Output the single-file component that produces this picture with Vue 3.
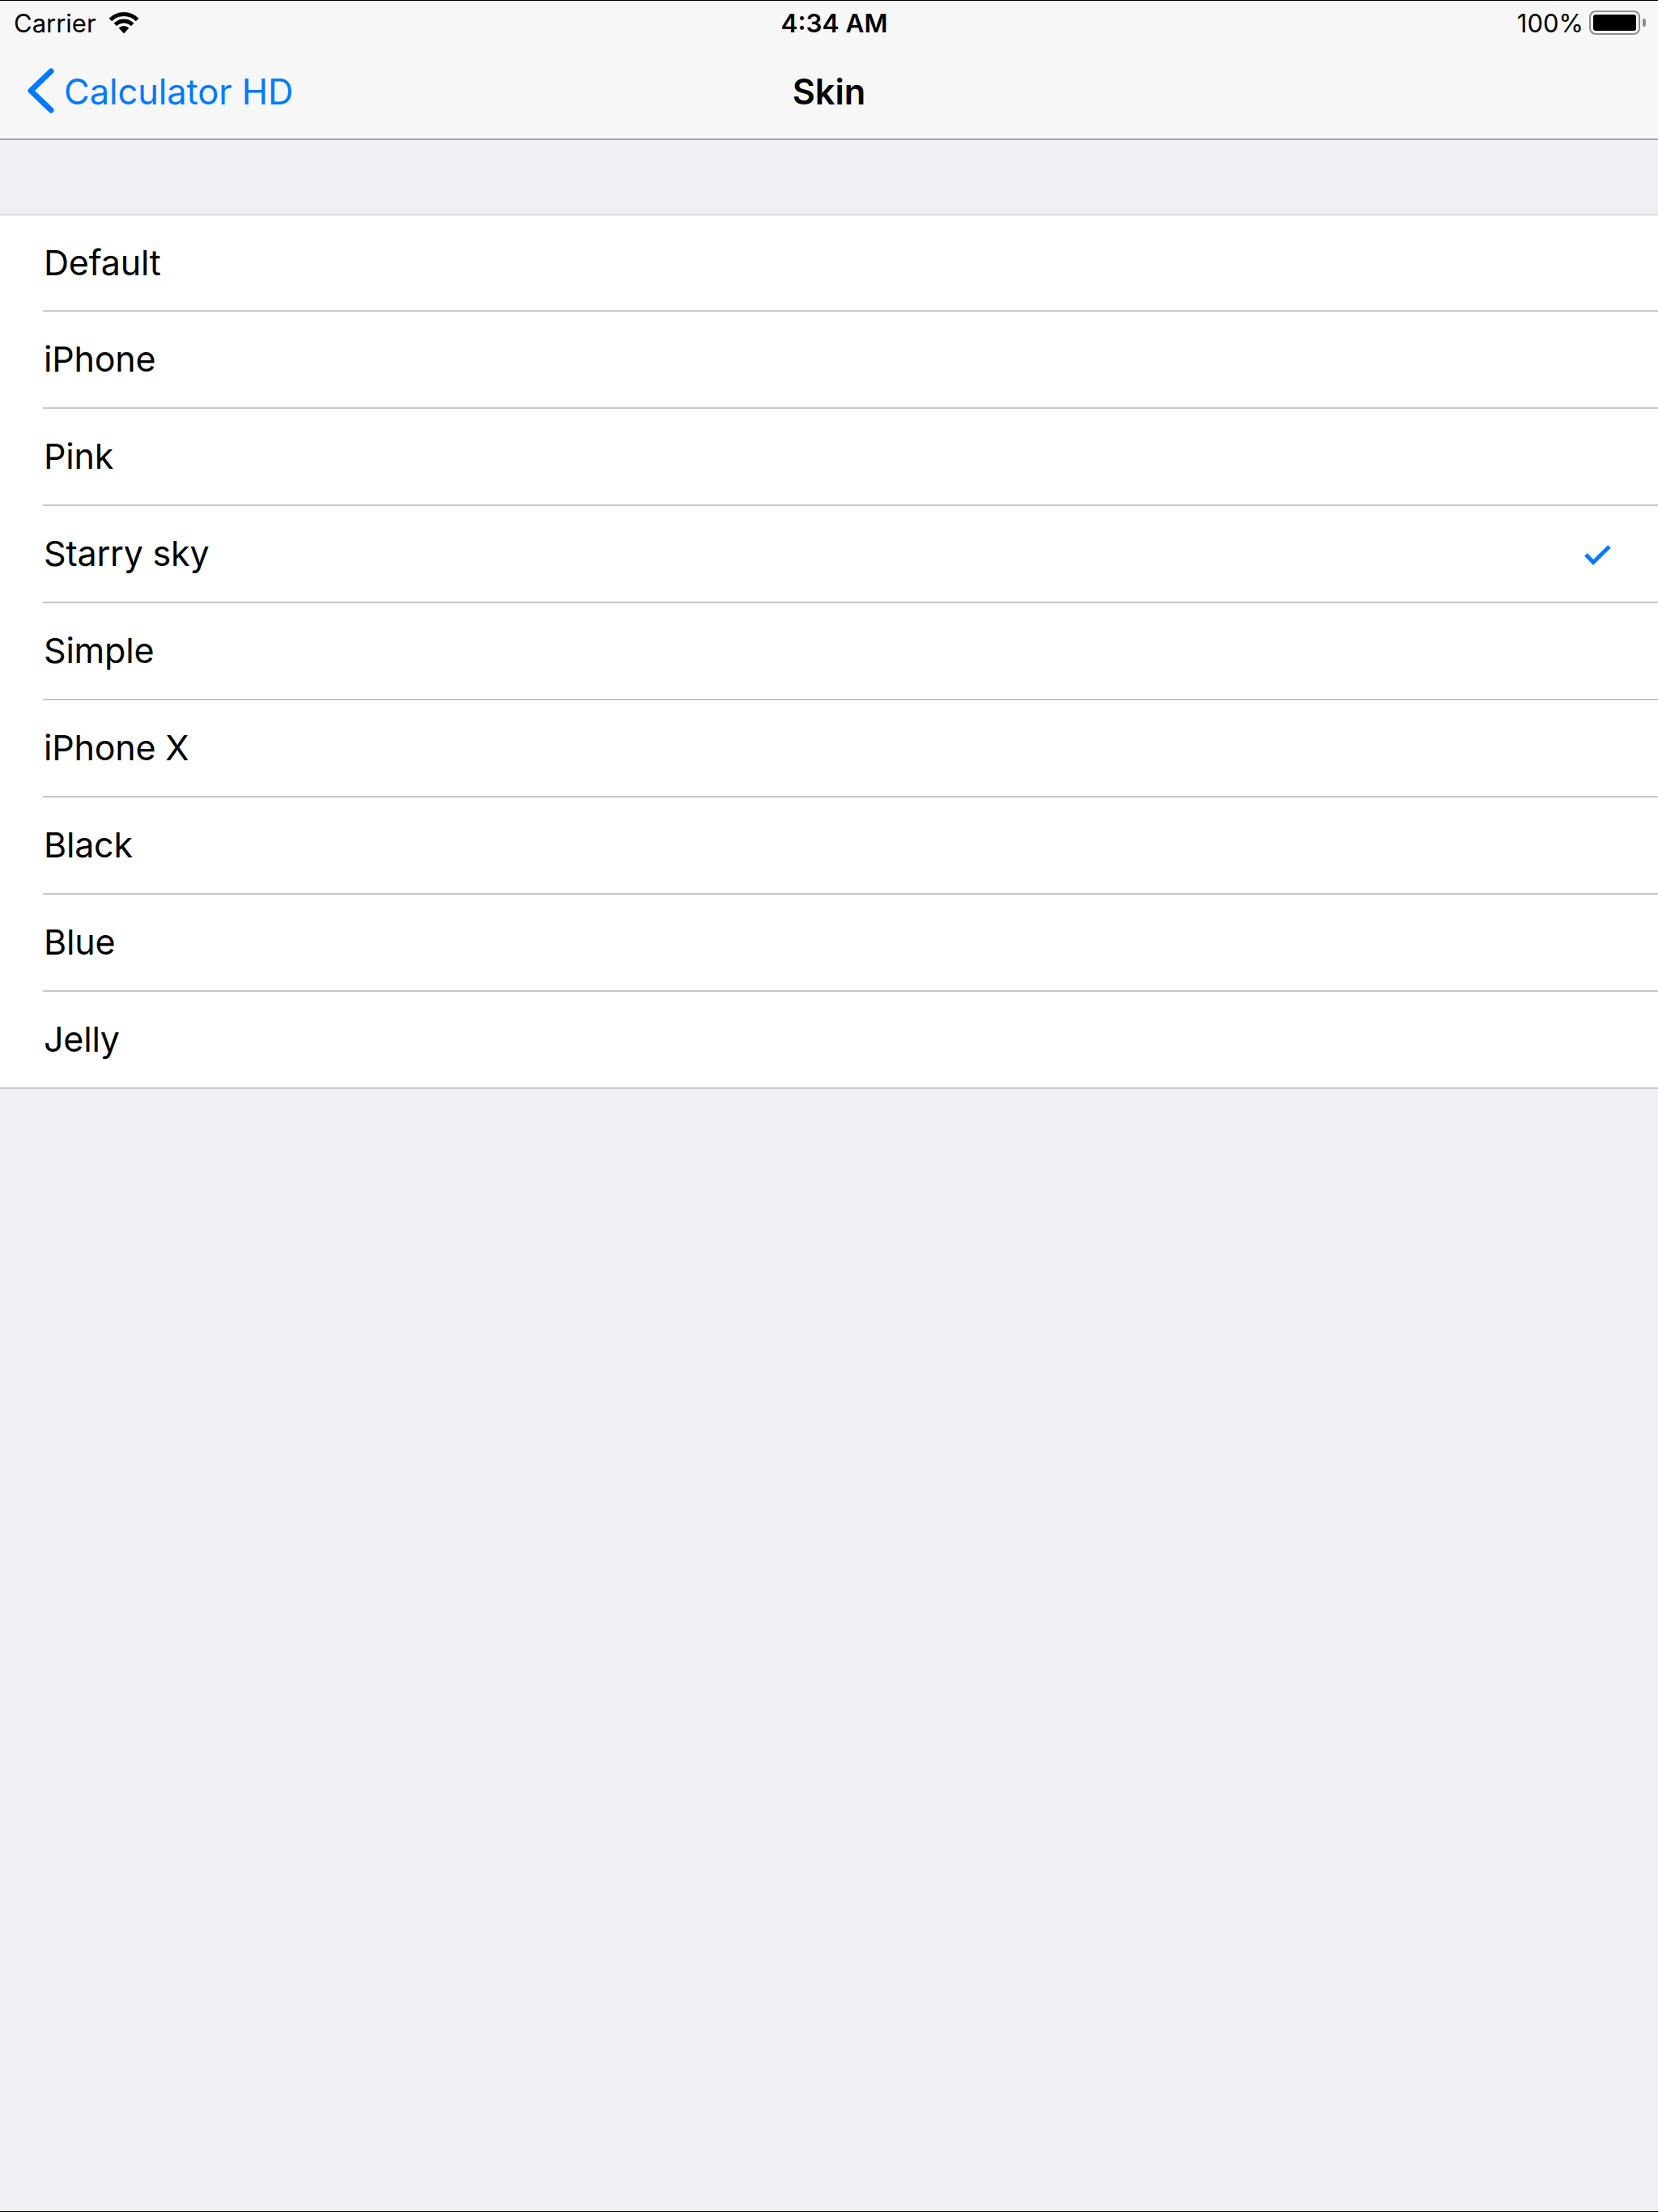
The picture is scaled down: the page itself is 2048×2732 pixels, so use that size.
<script setup>
const skins = ['Default', 'iPhone', 'Pink', 'Starry sky', 'Simple', 'iPhone X', 'Black', 'Blue', 'Jelly']
const selected = 'Starry sky'
</script>

<template>
  <div class="page">
    <header class="top">
      <div class="status">
        <div class="status-left">
          <span>Carrier</span>
          <svg class="wifi" width="38" height="27" viewBox="0 0 38 27">
            <path d="M2.4 9.4A23.5 23.5 0 0 1 35.6 9.4" fill="none" stroke="#000" stroke-width="5" />
            <path d="M8.4 15.4A15 15 0 0 1 29.6 15.4" fill="none" stroke="#000" stroke-width="5" />
            <path d="M19 26.5L12.6 19.6A9 9 0 0 1 25.4 19.6Z" fill="#000" />
          </svg>
        </div>
        <div class="time">4:34 AM</div>
        <div class="status-right">
          <span>100%</span>
          <div class="battery"><div class="battery-fill"></div></div>
          <div class="battery-nub"></div>
        </div>
      </div>
      <nav class="nav">
        <div class="back">
          <svg class="chevron" width="36" height="58" viewBox="0 0 36 58">
            <path d="M30 4L5 28L30 52" fill="none" stroke="#007aff" stroke-width="7" stroke-linecap="round" stroke-linejoin="round" />
          </svg>
          <span>Calculator HD</span>
        </div>
        <div class="title">Skin</div>
        <div></div>
      </nav>
    </header>

    <ul class="list">
      <li v-for="skin in skins" :key="skin" class="row">
        <span>{{ skin }}</span>
        <svg v-if="skin === selected" class="check" width="36" height="28" viewBox="0 0 36 28">
          <path d="M3 13L12 22.500L32 3" fill="none" stroke="#007aff" stroke-width="5" />
        </svg>
      </li>
    </ul>
  </div>
</template>

<style scoped>
.page {
  box-sizing: border-box;
  height: 2732px;
  display: flex;
  flex-direction: column;
  background: #efeff4;
  border-top: 1px solid #000;
  border-bottom: 1px solid #000;
  font-family: Inter, "Liberation Sans", sans-serif;
  color: #000;
  overflow: hidden;
}
.top {
  box-sizing: border-box;
  height: 172px;
  background: #f7f7f7;
  border-bottom: 2px solid #a7a7aa;
  display: flex;
  flex-direction: column;
}
.status {
  height: 54px;
  display: grid;
  grid-template-columns: 1fr auto 1fr;
  align-items: center;
  font-size: 31px;
  padding: 0 15px 0 17px;
}
.status-left {
  display: flex;
  align-items: center;
  gap: 15px;
}
.time {
  font-weight: 600;
  font-size: 31.5px;
  margin-left: 11px;
}
.status-right {
  display: flex;
  align-items: center;
  justify-content: flex-end;
}
.battery {
  box-sizing: border-box;
  width: 63px;
  height: 30px;
  margin-left: 7px;
  padding: 3px;
  border: 2px solid #8e8e8e;
  border-radius: 8px;
}
.battery-fill {
  height: 100%;
  background: #000;
  border-radius: 3px;
}
.battery-nub {
  width: 4px;
  height: 10px;
  margin-left: 3px;
  background: #8e8e8e;
  border-radius: 0 3px 3px 0;
}
.nav {
  flex: 1;
  display: grid;
  grid-template-columns: 1fr auto 1fr;
  align-items: center;
  font-size: 43.3px;
  padding-left: 33px;
  padding-right: 33px;
}
.back {
  display: flex;
  align-items: center;
  gap: 10px;
  color: #007aff;
}
.title {
  font-weight: 600;
}
.list {
  list-style: none;
  margin: 92px 0 0;
  padding: 0;
  background: #fff;
  border-top: 1px solid #c8c7cc;
  font-size: 43px;
  letter-spacing: -0.2px;
}
.row {
  box-sizing: border-box;
  height: 120px;
  margin-left: 53px;
  padding: 0 56px 2px 1px;
  display: flex;
  align-items: center;
  justify-content: space-between;
  border-bottom: 2px solid #c8c7cc;
}
.row:first-child {
  height: 119px;
  padding-bottom: 2px;
}
.row:last-child {
  margin-left: 0;
  padding-left: 54px;
}
.check {
  position: relative;
  top: 3px;
}
</style>
